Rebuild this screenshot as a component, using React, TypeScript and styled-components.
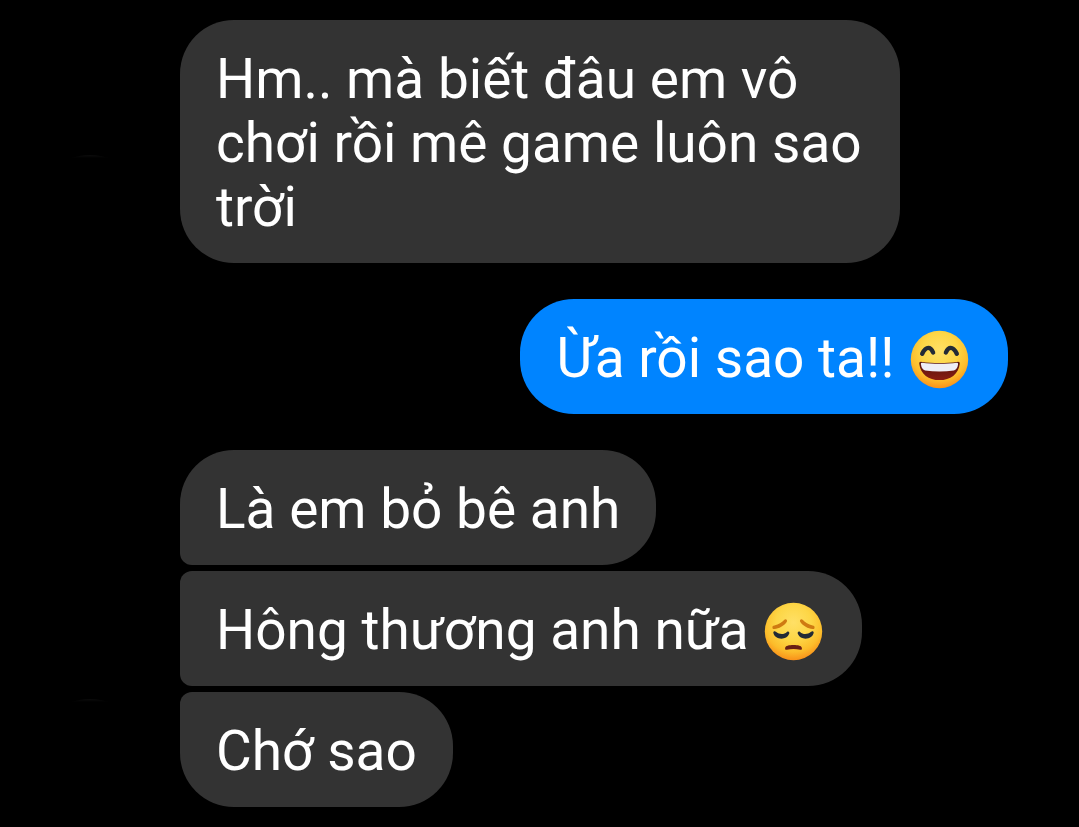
import React, { useId } from "react";
import styled, { createGlobalStyle, css } from "styled-components";

const GlobalStyle = createGlobalStyle`
  * {
    box-sizing: border-box;
  }
  body {
    margin: 0;
    background: #000;
    color: #fff;
    font-family: Roboto, "Noto Sans", sans-serif;
  }
`;

type Side = "received" | "sent";
type Position = "single" | "first" | "middle" | "last";
type Mood = "grin" | "pensive";

const Thread = styled.main`
  display: flex;
  flex-direction: column;
  gap: 36px;
  min-height: 100vh;
  padding: 20px 71px 20px 36px;
`;

const Group = styled.section<{ $side: Side }>`
  display: flex;
  align-items: flex-end;
  gap: 36px;
  justify-content: ${({ $side }) => ($side === "sent" ? "flex-end" : "flex-start")};
`;

/* Dark round avatar with a faint highlight on its upper rim. */
const Avatar = styled.div`
  flex: none;
  width: 108px;
  height: 108px;
  border-radius: 50%;
  background: linear-gradient(#0c0c0c, #000 3px);
`;

const Messages = styled.ul<{ $side: Side }>`
  display: flex;
  flex-direction: column;
  align-items: ${({ $side }) => ($side === "sent" ? "flex-end" : "flex-start")};
  gap: 6px;
  min-width: 0;
  max-width: 720px;
  margin: 0;
  padding: 0;
  list-style: none;
`;

const corners = {
  single: css`
    border-radius: 54px;
  `,
  first: css`
    border-radius: 54px 54px 54px 12px;
  `,
  middle: css`
    border-radius: 12px 54px 54px 12px;
  `,
  last: css`
    border-radius: 12px 54px 54px 54px;
  `,
};

const Bubble = styled.li<{ $side: Side; $position: Position }>`
  padding: 27px 36px 24px;
  background: ${({ $side }) => ($side === "sent" ? "#0084ff" : "#333333")};
  font-size: 55px;
  line-height: 64px;
  overflow-wrap: anywhere;
  ${({ $position }) => corners[$position]}
`;

const Face = styled.svg`
  width: 64px;
  height: 64px;
  vertical-align: bottom;
`;

function Emoji({ mood }: { mood: Mood }) {
  const id = useId();
  return (
    <Face viewBox="0.5 -1.5 64 64" role="img" aria-label={mood}>
      <defs>
        <radialGradient id={id} cx="32" cy="23" r="39" gradientUnits="userSpaceOnUse">
          <stop offset="0" stopColor="#ffe066" />
          <stop offset="0.45" stopColor="#fdd646" />
          <stop offset="0.75" stopColor="#fcbd2b" />
          <stop offset="1" stopColor="#f98a17" />
        </radialGradient>
        <linearGradient id={`${id}m`} x1="0" y1="0" x2="0" y2="1">
          <stop offset="0" stopColor="#54140f" />
          <stop offset="1" stopColor="#8a1d12" />
        </linearGradient>
      </defs>
      <circle cx="32" cy="32" r="28.7" fill={`url(#${id})`} />
      {mood === "grin" ? (
        <>
          <g fill="none" stroke="#232a36" strokeWidth="4.4" strokeLinecap="round" strokeLinejoin="round">
            <path d="M14.7 26.2C16.6 22.4 18.6 20.4 20.8 20.4S24.5 22.4 25.6 25" />
            <path d="M38.4 25C39.5 22.4 41 20.4 43.2 20.4S47.4 22.4 49.3 26.2" />
          </g>
          <path
            d="M14.2 34.4C12.3 34 11.6 35 11.8 36.4C12.9 46.5 21.2 52.6 32 52.6S51.1 46.5 52.2 36.4C52.4 35 51.7 34 49.8 34.4C38.5 35.9 25.5 35.9 14.2 34.4Z"
            fill={`url(#${id}m)`}
          />
          <path
            d="M14.4 35.2C25.5 36.6 38.5 36.6 49.6 35.2C50.5 35.2 50.8 36 50.5 37.2C50 40.3 48.6 42.4 46.4 42.9C37 44.4 27 44.4 17.6 42.9C15.4 42.4 14 40.3 13.5 37.2C13.2 36 13.5 35.2 14.4 35.2Z"
            fill="#eeeef6"
          />
        </>
      ) : (
        <>
          <g fill="#cf7a12">
            <path d="M11 28.4C10.6 26.9 11.4 26.1 12.9 25.9C17.2 25.1 20.3 23 22.6 20.5C24.2 18.9 26.4 20.6 25.2 22.6C22.4 26.6 17.6 29.2 12.9 29.6C11.8 29.7 11.2 29.3 11 28.4Z" />
            <path d="M53 28.4C53.4 26.9 52.6 26.1 51.1 25.9C46.8 25.1 43.7 23 41.4 20.5C39.8 18.9 37.6 20.6 38.8 22.6C41.6 26.6 46.4 29.2 51.1 29.6C52.2 29.7 52.8 29.3 53 28.4Z" />
          </g>
          <g fill="#232a36">
            <path d="M11.8 33.3C11.6 31.6 13.3 31.2 14.4 32.2C17.9 35 22.4 35.2 25.4 32.4C26.9 31.2 28.3 32.4 27.7 34.3C26.3 37.6 23.4 39.2 20 39.2C15.9 39.2 12.5 36.8 11.8 33.3Z" />
            <path d="M52.2 33.3C52.4 31.6 50.7 31.2 49.6 32.2C46.1 35 41.6 35.2 38.6 32.4C37.1 31.2 35.7 32.4 36.3 34.3C37.7 37.6 40.6 39.2 44 39.2C48.1 39.2 51.5 36.8 52.2 33.3Z" />
          </g>
          <path
            d="M23.6 48.8C24 46.2 27.5 45.6 32 45.6S40 46.2 40.4 48.8C40.6 50.4 39.6 50.5 38.6 50.2C34.4 49.4 29.6 49.4 25.4 50.2C24.4 50.5 23.4 50.4 23.6 48.8Z"
            fill="#691e14"
          />
        </>
      )}
    </Face>
  );
}

interface Message {
  text: string;
  emoji?: Mood;
}

const conversation: { side: Side; messages: Message[] }[] = [
  { side: "received", messages: [{ text: "Hm.. mà biết đâu em vô chơi rồi mê game luôn sao trời" }] },
  { side: "sent", messages: [{ text: "Ừa rồi sao ta!!", emoji: "grin" }] },
  {
    side: "received",
    messages: [
      { text: "Là em bỏ bê anh" },
      { text: "Hông thương anh nữa", emoji: "pensive" },
      { text: "Chớ sao" },
    ],
  },
];

function positionOf(index: number, count: number): Position {
  if (count === 1) return "single";
  if (index === 0) return "first";
  return index === count - 1 ? "last" : "middle";
}

export default function App() {
  return (
    <>
      <GlobalStyle />
      <Thread lang="vi">
        {conversation.map(({ side, messages }, g) => (
          <Group key={g} $side={side}>
            {side === "received" && <Avatar />}
            <Messages $side={side}>
              {messages.map(({ text, emoji }, i) => (
                <Bubble key={text} $side={side} $position={positionOf(i, messages.length)}>
                  {text}
                  {emoji && (
                    <>
                      {" "}
                      <Emoji mood={emoji} />
                    </>
                  )}
                </Bubble>
              ))}
            </Messages>
          </Group>
        ))}
      </Thread>
    </>
  );
}
